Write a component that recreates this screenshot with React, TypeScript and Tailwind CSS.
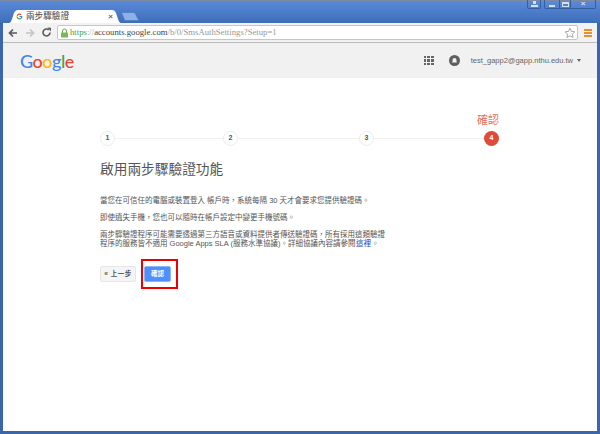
import React from 'react';

const Step = ({ n, active }: { n: number; active?: boolean }) => (
  <div
    className={
      active
        ? 'w-[15px] h-[15px] shrink-0 rounded-full bg-[#dd4b39] flex items-center justify-center text-[7px] font-bold text-white'
        : 'w-[15px] h-[15px] shrink-0 rounded-full bg-white border border-[#ebebeb] flex items-center justify-center text-[7px] font-bold text-[#555]'
    }
  >
    {n}
  </div>
);

const StepLine = ({ width }: { width: string }) => <div className={`h-px bg-[#efefef] ${width}`} />;

export default function App() {
  return (
    <div className="w-[600px] h-[434px] overflow-hidden flex flex-col bg-[#3a66ac] font-['Liberation_Sans','Noto_Sans_CJK_TC',sans-serif]">
      {/* tab strip */}
      <div className="h-[23px] shrink-0 relative flex items-end pl-[8px] bg-gradient-to-b from-[#5a8ad8] to-[#3e6db8] border-t border-[#7d8aa3]">
        <div className="relative w-[114px] h-[13px] flex items-center pl-[8px] pr-[9px]">
          <svg className="absolute inset-0" width="114" height="13" viewBox="0 0 114 13">
            <path d="M0 13 C3 13 3 11 4 9 L6 3 C7 1 8 0 10 0 L104 0 C106 0 107 1 108 3 L110 9 C111 11 111 13 114 13 Z" fill="#fff" />
          </svg>
          <svg className="relative shrink-0" width="7" height="7" viewBox="0 0 24 24">
            <path d="M22 12.200c0-.7-.1-1.400-.2-2H12v3.900h5.600c-.2 1.300-1 2.400-2.100 3.100v2.600h3.300c2-1.800 3.200-4.500 3.200-7.600z" fill="#4285f4" />
            <path d="M12 22.500c2.800 0 5.200-.9 6.800-2.500l-3.300-2.600c-.9.600-2.100 1-3.500 1-2.700 0-5-1.800-5.800-4.300H2.800v2.600c1.700 3.500 5.200 5.800 9.200 5.800z" fill="#34a853" />
            <path d="M6.200 14.100c-.4-1.300-.4-2.700 0-4V7.500H2.800c-1.400 2.800-1.400 6.200 0 9z" fill="#fbbc05" />
            <path d="M12 5.800c1.500 0 2.900.5 4 1.500l2.900-2.900C17.100 2.600 14.700 1.500 12 1.500c-4 0-7.500 2.300-9.200 6l3.400 2.600C7 7.600 9.300 5.800 12 5.800z" fill="#ea4335" />
          </svg>
          <span className="relative ml-[3px] text-[8.600px] leading-none text-[#444] flex-1 whitespace-nowrap">兩步驟驗證</span>
          <span className="relative text-[8px] leading-none font-bold text-[#666]">×</span>
        </div>
        <svg className="-ml-[1px] mb-[2px]" width="18" height="9" viewBox="0 0 18 9">
          <path d="M0.500 0.500 H12 C13.500 0.500 14 1 14.500 2 L17.500 8 C17.500 8.500 17 8.500 16 8.500 H5 C4 8.500 3.500 8 3.200 7 Z" fill="#8cb1e6" stroke="#4a76bd" strokeWidth="0.600" />
        </svg>
        {/* window controls */}
        <div className="absolute -top-px right-[4px] flex gap-[3px] h-[9px]">
          <div className="w-[14px] h-full border border-t-0 border-[#35609f] rounded-b-[2px] flex items-center justify-center">
            <svg width="7" height="6" viewBox="0 0 7 6"><path d="M2 0h3v3H2zM0 4h7v2H0z" fill="#d5e0f2" /></svg>
          </div>
          <div className="w-[52px] h-full border border-t-0 border-[#35609f] rounded-b-[2px] flex items-center">
            <div className="w-[14px] h-full flex items-end justify-center pb-[1px]"><div className="w-[6px] h-[2px] bg-[#d5e0f2]" /></div>
            <div className="w-[12px] h-full border-x border-[#35609f] flex items-center justify-center"><div className="w-[7px] h-[5px] border border-t-2 border-[#d5e0f2]" /></div>
            <div className="flex-1 text-center text-[8px] leading-[8px] font-bold text-[#d5e0f2]">×</div>
          </div>
        </div>
      </div>

      {/* browser body */}
      <div className="flex-1 flex flex-col mx-[3px] mb-[3px] min-h-0 bg-white">
        {/* toolbar */}
        <div className="h-[20px] shrink-0 bg-[#f2f2f2] border-b border-[#bdbdbd] flex items-center pl-[5px] pr-[5px]">
          <svg className="shrink-0" width="10" height="10" viewBox="0 0 10 10"><path d="M9 5H2M5 1.500 1.500 5 5 8.500" fill="none" stroke="#5a5a5a" strokeWidth="1.700" /></svg>
          <svg className="ml-[7px] shrink-0" width="10" height="10" viewBox="0 0 10 10"><path d="M1 5h7M5 1.500 8.500 5 5 8.500" fill="none" stroke="#c4c4c4" strokeWidth="1.700" /></svg>
          <svg className="ml-[6px] shrink-0" width="11" height="11" viewBox="0 0 11 11"><path d="M9 5.500A3.500 3.500 0 1 1 7.800 2.800" fill="none" stroke="#5a5a5a" strokeWidth="1.600" /><path d="M6.500 0.500 10 0.800V4.500Z" fill="#5a5a5a" /></svg>
          <div className="ml-[5px] flex-1 h-[15px] bg-white border border-[#c6c6c6] rounded-[2px] flex items-center pl-[3px] pr-[1px] font-['Liberation_Serif',serif] text-[8.700px] leading-none whitespace-nowrap">
            <svg className="shrink-0" width="7" height="10" viewBox="0 0 7 10"><path d="M1.500 5V3a2 2 0 0 1 4 0v2" fill="none" stroke="#6aa84f" /><rect y="4.500" width="7" height="5" rx="0.500" fill="#7cb65f" /></svg>
            <span className="ml-[2px] text-[#3fa03f]">https</span>
            <span className="text-[#aaa]">://</span>
            <span className="text-[#444]">accounts.google.com</span>
            <span className="text-[#999]">/b/0/SmsAuthSettings?Setup=1</span>
            <svg className="ml-auto shrink-0" width="12" height="12" viewBox="0 0 24 24"><path d="m12 2.500 2.900 6.300 6.900.8-5.100 4.700 1.400 6.800-6.100-3.400-6.100 3.400 1.400-6.800L2.200 9.600l6.900-.8z" fill="#fff" stroke="#9a9a9a" strokeWidth="1.700" /></svg>
          </div>
          <div className="ml-[6px] flex flex-col gap-[1px] w-[8px] shrink-0">
            <div className="h-[2px] bg-[#e8912c]" />
            <div className="h-[2px] bg-[#e8912c]" />
            <div className="h-[2px] bg-[#e8912c]" />
          </div>
        </div>

        {/* google bar */}
        <div className="h-[35px] shrink-0 bg-[#f1f1f1] flex items-center pl-[17px] pr-[16px]">
          <div className="font-['Lato',sans-serif] text-[18px] leading-none tracking-[-0.5px] font-medium">
            <span className="text-[#4285f4]">G</span>
            <span className="text-[#ea4335]">o</span>
            <span className="text-[#fbbc05]">o</span>
            <span className="text-[#4285f4]">g</span>
            <span className="text-[#34a853]">l</span>
            <span className="text-[#ea4335]">e</span>
          </div>
          <div className="ml-auto grid grid-cols-3 gap-[1px] w-[10px]">
            {Array.from({ length: 9 }).map((_, i) => (
              <div key={i} className="w-[2.500px] h-[2.500px] bg-[#666]" />
            ))}
          </div>
          <div className="ml-[15px] w-[11px] h-[11px] rounded-full bg-[#5f5f5f] flex items-center justify-center">
            <svg width="7" height="7" viewBox="0 0 7 7"><path d="M3.500 1a2 2 0 0 1 2 2v1.500L6 5.500H1l.5-1V3a2 2 0 0 1 2-2z" fill="#f1f1f1" /></svg>
          </div>
          <span className="ml-[11px] text-[7.500px] leading-none text-[#666]">test_gapp2@gapp.nthu.edu.tw</span>
          <div className="ml-[4px] w-0 h-0 border-x-[2.500px] border-x-transparent border-t-[3px] border-t-[#666]" />
        </div>

        {/* page */}
        <div className="flex-1 bg-white pl-[97px]">
          <div className="w-[400px] pt-[36px]">
            <div className="flex justify-end pr-[1px] text-[11px] leading-[12px] text-[#e6705f]">確認</div>
            <div className="mt-[5px] flex items-center">
              <Step n={1} />
              <StepLine width="w-[108px]" />
              <Step n={2} />
              <StepLine width="w-[121px]" />
              <Step n={3} />
              <StepLine width="w-[110px]" />
              <Step n={4} active />
            </div>
            <h1 className="mt-[15px] text-[13.700px] leading-[18px] font-normal text-[#555]">啟用兩步驟驗證功能</h1>
            <div className="mt-[17px] w-[290px] text-[7.500px] leading-[9px] text-[#555]">
              <p>當您在可信任的電腦或裝置登入 帳戶時，系統每隔 30 天才會要求您提供驗證碼。</p>
              <p className="mt-[8px]">即使遺失手機，您也可以隨時在帳戶設定中變更手機號碼。</p>
              <p className="mt-[8px]">
                兩步驟驗證程序可能需要透過第三方語音或資料提供者傳送驗證碼，所有採用這類驗證程序的服務皆不適用 Google Apps SLA (服務水準協議)。詳細協議內容請參閱<span className="mx-[0.5px] text-[#15c]">這裡</span>。
              </p>
            </div>
            <div className="mt-[18px] flex items-start">
              <button className="w-[36px] h-[16px] rounded-[2px] bg-[#f5f5f5] border border-[#e6e6e6] text-[6.500px] tracking-[0.5px] font-bold text-[#555]">« 上一步</button>
              <div className="relative ml-[8px]">
                <button className="block w-[27px] h-[16px] rounded-[2px] bg-[#4d90fe] border border-[#8ab4f8] text-[6.500px] font-bold text-white">確認</button>
                <div className="absolute -left-[3px] -top-[7px] w-[37px] h-[30px] border-2 border-[#ee0000]" />
              </div>
            </div>
          </div>
        </div>
      </div>
    </div>
  );
}
